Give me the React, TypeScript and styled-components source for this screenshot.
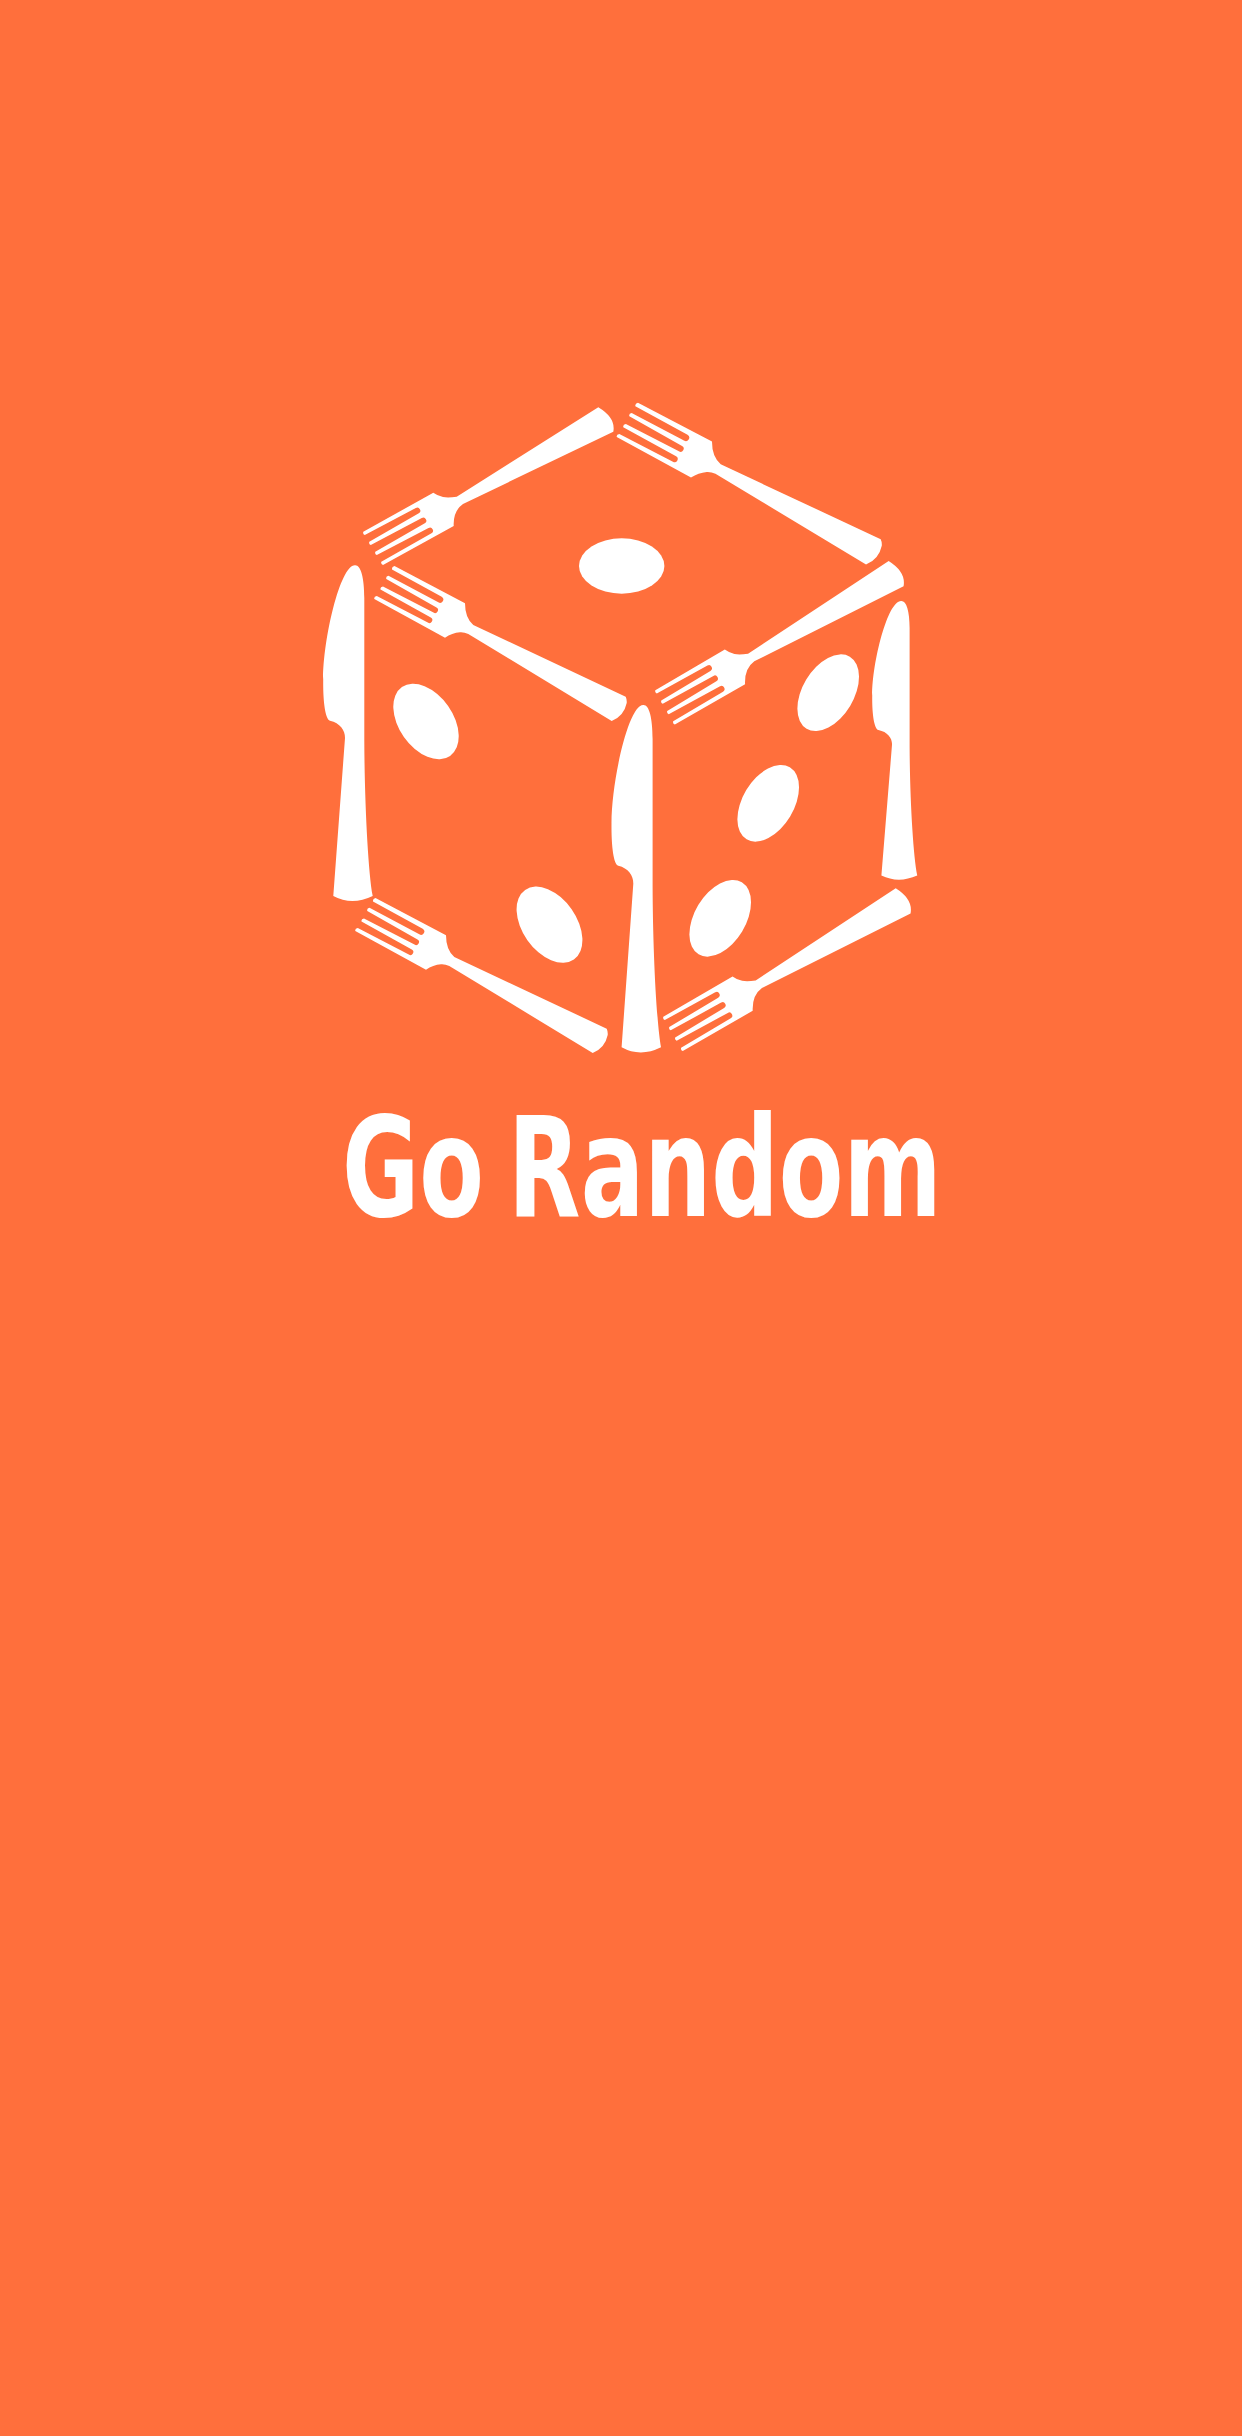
import React from "react";
import styled, { createGlobalStyle } from "styled-components";

const Global = createGlobalStyle`
  html, body { margin: 0; padding: 0; background: #ff6f3c; }
`;

const Page = styled.main`
  width: 1242px;
  height: 2436px;
  box-sizing: border-box;
  padding: 380px 0 0 300px;
  background: #ff6f3c;
  display: flex;
  flex-direction: column;
  align-items: flex-start;
  overflow: hidden;
`;

const Logo = styled.svg`
  display: block;
  width: 660px;
  height: 720px;
  flex: none;
  fill: #ffffff;
`;

const Title = styled.h1`
  margin: 16.7px 0 0 42px;
  height: 102px;
  width: 620px;
  font-family: "DejaVu Sans", "Noto Sans", sans-serif;
  font-weight: 700;
  font-size: 139px;
  line-height: 102px;
  word-spacing: -13px;
  white-space: nowrap;
  color: #ffffff;
`;

const TitleText = styled.span`
  display: inline-block;
  transform: scaleX(0.678);
  transform-origin: left center;
`;

const FORK_UP =
  "M433.3 492.7 L363.3 531.8 Q362.6 534.4 364.8 535 L415.8 508.1 A3 3 0 0 1 418.8 513.3 L369.3 541.8 Q368.6 544.4 370.8 545 L421.8 518.1 A3 3 0 0 1 424.8 523.3 L375.3 551.8 Q374.6 554.4 376.8 555 L428.5 528.1 A3 3 0 0 1 431.5 533.3 L381.3 561.8 Q380.6 564.4 383 565 L453.7 526 Q453 511 463 504 L613.3 431.7 Q616 418 598.3 407.3 L456.7 496.7 Q448 498 443 497 Q438 496 433.3 492.7 Z";

const FORK_DOWN =
  "M465 603.3 L394.5 566 Q391.6 566.6 392 569.5 L441.7 596.7 A3.2 3.2 0 0 1 438.3 602.3 L388.5 575.8 Q385.6 576.4 386.3 579 L436.5 607.4 A3 3 0 0 1 433.5 612.6 L383 586.5 Q380 587 380.5 589.5 L430.8 617.4 A3 3 0 0 1 427.8 622.6 L376.8 595.9 Q373.8 596.4 374.3 598.9 L445 637.7 Q452 633 460 632.3 Q464 632 468.3 634 L611.7 721 Q624 716 626.7 703 Q627 699.5 625.7 696.7 L473.3 625 Q465 618 465 603.3 Z";

const KNIFE =
  "M355 565.3 C361 565 364.5 578 364.3 600 L364.3 740 C364.5 800 368 870 372.7 896 Q352 906 333.3 896 L345 738 C345 730 340 723 330 720.7 C325 719 323 700 323.2 680 C323 640 340 565 355 565.3 Z";

const forks: { d: string; transform: string }[] = [
  { d: FORK_UP, transform: "" },
  { d: FORK_UP, transform: "translate(292 158.4) translate(364 533.3) scale(0.993 1.037) translate(-364 -533.3)" },
  { d: FORK_UP, transform: "translate(300 485) translate(364 533.3) scale(0.989 1.032) translate(-364 -533.3)" },
  { d: FORK_DOWN, transform: "translate(243.4 -163.3) translate(393.3 567.3) scale(1.05 1.045) translate(-393.3 -567.3)" },
  { d: FORK_DOWN, transform: "" },
  { d: FORK_DOWN, transform: "translate(-19 332)" },
];

const knives: string[] = [
  "",
  "translate(288.3 705) scale(1 1.035) translate(0 -565.3)",
  "translate(872.3 601) scale(0.91 0.83) translate(-323.3 -565.3)",
];

const pips: { cx: number; cy: number; rx: number; ry: number; rot: number }[] = [
  { cx: 621.7, cy: 566, rx: 42.7, ry: 27.7, rot: 0 },
  { cx: 426, cy: 721.5, rx: 42, ry: 27, rot: 55 },
  { cx: 549.5, cy: 924.7, rx: 42.5, ry: 27, rot: 55 },
  { cx: 828.2, cy: 692.7, rx: 42, ry: 25.6, rot: -59 },
  { cx: 768.2, cy: 803.3, rx: 42, ry: 25.6, rot: -59 },
  { cx: 720.2, cy: 918.3, rx: 42, ry: 25.6, rot: -59 },
];

export default function App() {
  return (
    <Page>
      <Global />
      <Logo viewBox="300 380 660 720" aria-label="Dice made of forks and knives">
        {forks.map((f, i) => (
          <path key={`f${i}`} d={f.d} transform={f.transform || undefined} />
        ))}
        {knives.map((t, i) => (
          <path key={`k${i}`} d={KNIFE} transform={t || undefined} />
        ))}
        {pips.map((p, i) => (
          <ellipse
            key={`p${i}`}
            cx={p.cx}
            cy={p.cy}
            rx={p.rx}
            ry={p.ry}
            transform={`rotate(${p.rot} ${p.cx} ${p.cy})`}
          />
        ))}
      </Logo>
      <Title>
        <TitleText>Go Random</TitleText>
      </Title>
    </Page>
  );
}
